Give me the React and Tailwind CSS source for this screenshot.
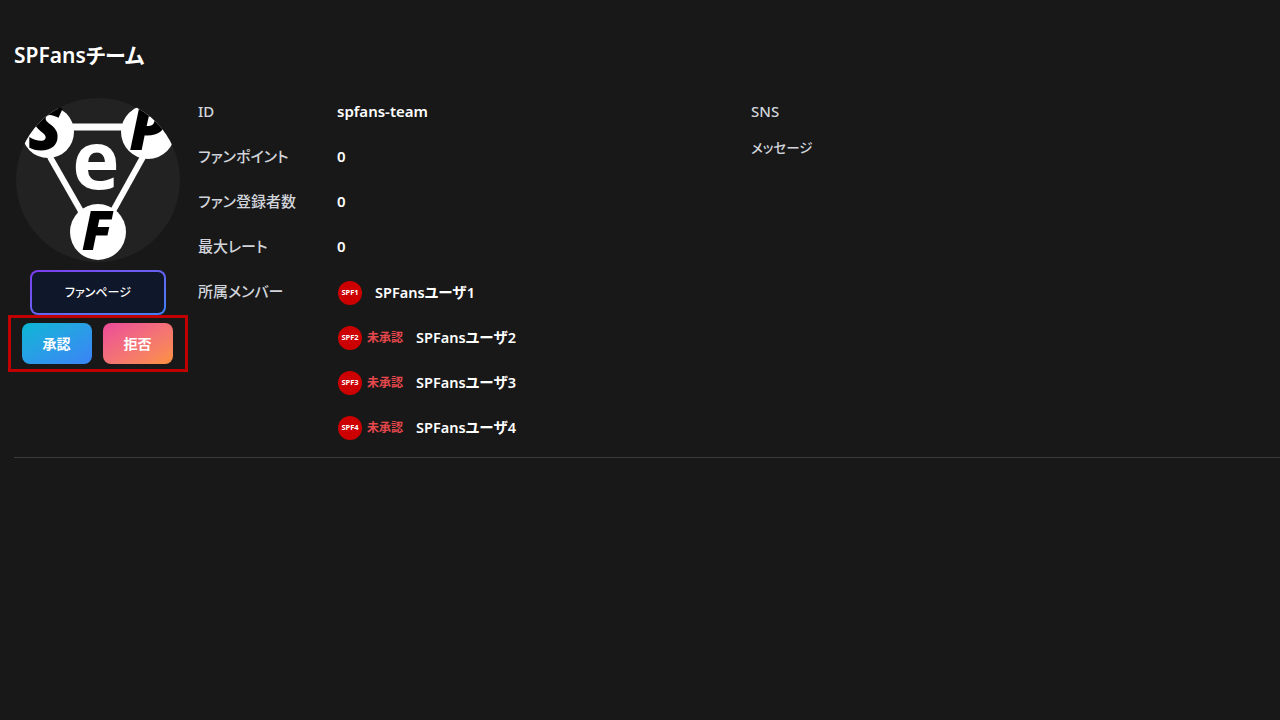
import React from 'react';

const fontStack = { fontFamily: '"Noto Sans", "Noto Sans CJK JP", sans-serif' };

const stats = [
  { label: 'ID', value: 'spfans-team' },
  { label: 'ファンポイント', value: '0' },
  { label: 'ファン登録者数', value: '0' },
  { label: '最大レート', value: '0' },
];

const members = [
  { tag: 'SPF1', name: 'SPFansユーザ1', pending: false },
  { tag: 'SPF2', name: 'SPFansユーザ2', pending: true },
  { tag: 'SPF3', name: 'SPFansユーザ3', pending: true },
  { tag: 'SPF4', name: 'SPFansユーザ4', pending: true },
];

const TeamLogo = () => (
  <svg width="164" height="164" viewBox="0 0 164 164" className="block">
    <defs>
      <clipPath id="logoClip">
        <circle cx="82" cy="82" r="82" />
      </clipPath>
    </defs>
    <circle cx="82" cy="82" r="82" fill="#222222" />
    <g clipPath="url(#logoClip)">
      <path d="M32 29 H132" fill="none" stroke="#fff" strokeWidth="7" />
      <path d="M34 59 L70 122" fill="none" stroke="#fff" strokeWidth="6" />
      <path d="M127 59 L92 122" fill="none" stroke="#fff" strokeWidth="6" />
      <circle cx="32" cy="34" r="26" fill="#fff" />
      <circle cx="132" cy="34" r="27" fill="#fff" />
      <circle cx="82" cy="134" r="28" fill="#fff" />
      <text x="29" y="52" textAnchor="middle" fontSize="62" fontWeight="800" fontStyle="italic" fontFamily="Open Sans" fill="#000">S</text>
      <text x="132" y="52" textAnchor="middle" fontSize="60" fontWeight="800" fontStyle="italic" fontFamily="Open Sans" fill="#000">P</text>
      <text x="81" y="152" textAnchor="middle" fontSize="54" fontWeight="800" fontStyle="italic" fontFamily="Open Sans" fill="#000">F</text>
    </g>
    <text x="80" y="91" textAnchor="middle" fontSize="80" fontWeight="700" fontFamily="Open Sans" fill="#fff">e</text>
  </svg>
);

const MemberRow = ({ tag, name, pending }) => (
  <div className="flex items-center h-[45px]">
    <div className="w-6 h-6 rounded-full bg-[#cc0000] flex items-center justify-center ml-[3px] shrink-0">
      <span className="text-[7.5px] font-bold text-white leading-none">{tag}</span>
    </div>
    {pending && <span className="ml-[5px] text-[12px] font-bold text-[#e5484d] leading-none">未承認</span>}
    <span className="ml-[13px] text-[14.5px] font-semibold text-white">{name}</span>
  </div>
);

export default function App() {
  return (
    <div className="min-h-[720px] bg-[#181818] text-white pt-[40px] [font-feature-settings:'palt']" style={fontStack}>
      <h1 className="ml-[14px] h-[30px] text-[21px] leading-[30px] font-semibold">SPFansチーム</h1>
      <div className="flex border-b border-[#3a3a3a] ml-[14px] pb-[8px] mt-[20px] h-[368px]">
        <div className="-ml-[6px] w-[180px] shrink-0 flex flex-col items-center h-[300px] pt-[8px]">
          <TeamLogo />
          <div className="mt-[8px] w-[136px] h-[45px] rounded-lg bg-gradient-to-br from-[#7c3aed] to-[#3b82f6] p-[2px]">
            <button className="w-full h-full rounded-[6px] bg-[#0f172a] text-[12px] font-medium text-white">
              ファンページ
            </button>
          </div>
          <div className="w-[180px] h-[57px] border-[3px] border-[#c00000] flex items-center justify-center gap-[11px] pr-[2px]">
            <button className="w-[70px] h-[41px] rounded-lg bg-gradient-to-br from-[#06b6d4] to-[#3b82f6] text-[14px] font-bold text-white">承認</button>
            <button className="w-[70px] h-[41px] rounded-lg bg-gradient-to-br from-[#ec4899] to-[#fb923c] text-[14px] font-bold text-white">拒否</button>
          </div>
        </div>
        <div className="ml-[10px] w-[553px] shrink-0 text-[15px] -mt-[1px]">
          {stats.map((s) => (
            <div key={s.label} className="flex items-center h-[45px]">
              <span className="w-[139px] font-medium text-[#d1d5db]">{s.label}</span>
              <span className="font-semibold text-white">{s.value}</span>
            </div>
          ))}
          <div className="flex">
            <span className="w-[139px] h-[45px] flex items-center font-medium text-[#d1d5db]">所属メンバー</span>
            <div className="flex flex-col -ml-[2px] mt-[1px]">
              {members.map((m) => (
                <MemberRow key={m.tag} {...m} />
              ))}
            </div>
          </div>
        </div>
        <div className="text-[15px] font-medium text-[#d1d5db] -mt-[1px]">
          <div className="h-[45px] flex items-center">SNS</div>
          <div className="text-[13.5px] -mt-[8px] h-[45px] flex items-center">メッセージ</div>
        </div>
      </div>
    </div>
  );
}
